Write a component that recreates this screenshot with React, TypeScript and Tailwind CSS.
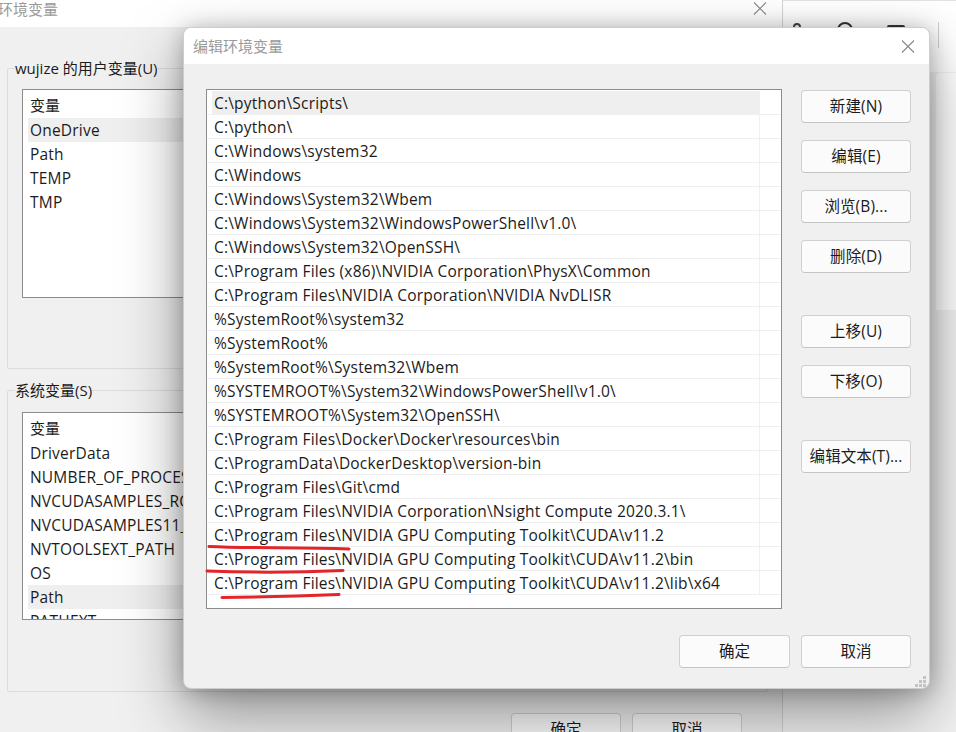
import React from "react";

const FONT = { fontFamily: '"Open Sans", "Noto Sans CJK SC", sans-serif' };

const paths: string[] = [
  "C:\\python\\Scripts\\",
  "C:\\python\\",
  "C:\\Windows\\system32",
  "C:\\Windows",
  "C:\\Windows\\System32\\Wbem",
  "C:\\Windows\\System32\\WindowsPowerShell\\v1.0\\",
  "C:\\Windows\\System32\\OpenSSH\\",
  "C:\\Program Files (x86)\\NVIDIA Corporation\\PhysX\\Common",
  "C:\\Program Files\\NVIDIA Corporation\\NVIDIA NvDLISR",
  "%SystemRoot%\\system32",
  "%SystemRoot%",
  "%SystemRoot%\\System32\\Wbem",
  "%SYSTEMROOT%\\System32\\WindowsPowerShell\\v1.0\\",
  "%SYSTEMROOT%\\System32\\OpenSSH\\",
  "C:\\Program Files\\Docker\\Docker\\resources\\bin",
  "C:\\ProgramData\\DockerDesktop\\version-bin",
  "C:\\Program Files\\Git\\cmd",
  "C:\\Program Files\\NVIDIA Corporation\\Nsight Compute 2020.3.1\\",
  "C:\\Program Files\\NVIDIA GPU Computing Toolkit\\CUDA\\v11.2",
  "C:\\Program Files\\NVIDIA GPU Computing Toolkit\\CUDA\\v11.2\\bin",
  "C:\\Program Files\\NVIDIA GPU Computing Toolkit\\CUDA\\v11.2\\lib\\x64",
];

const userVars = ["OneDrive", "Path", "TEMP", "TMP"];
const sysVars = [
  "DriverData",
  "NUMBER_OF_PROCESSORS",
  "NVCUDASAMPLES_ROOT",
  "NVCUDASAMPLES11_2_ROOT",
  "NVTOOLSEXT_PATH",
  "OS",
  "Path",
  "PATHEXT",
];

function WinButton({ label, className = "" }: { label: string; className?: string }) {
  return (
    <div
      className={
        "h-[33px] flex items-center justify-center rounded-[4px] border border-[#d0d0d0] border-b-[#c4c4c4] bg-[#fbfbfb] text-[15.5px] tracking-[0.1px] text-[#1b1b1b] " +
        className
      }
    >
      {label}
    </div>
  );
}

function CloseX({ color = "#8a8a8a" }: { color?: string }) {
  return (
    <svg width="14" height="13" viewBox="0 0 14 13">
      <path d="M1 0.5 L13 12.5 M13 0.5 L1 12.5" stroke={color} strokeWidth="1.1" fill="none" />
    </svg>
  );
}

function VarList({
  items,
  selected,
  heightClass,
}: {
  items: string[];
  selected: string;
  heightClass: string;
}) {
  return (
    <div className={"ml-[14px] w-[600px] border border-[#8c8c8c] bg-white overflow-hidden " + heightClass}>
      <div className="h-[28px] flex items-center pl-[7px] pt-[2px] text-[15px] text-[#1b1b1b]">变量</div>
      {items.map((v) => (
        <div key={v} className="h-[24px] flex pl-[5px]">
          <div
            className={
              "flex-1 flex items-center pl-[2px] pt-[2px] text-[15.5px] tracking-[0.2px] text-[#1b1b1b] whitespace-nowrap " +
              (v === selected ? "bg-[#efefef]" : "")
            }
          >
            {v}
          </div>
        </div>
      ))}
    </div>
  );
}

export default function App() {
  return (
    <div className="relative w-[956px] h-[732px] overflow-hidden bg-[#f0f0f0]" style={FONT}>
      {/* Right-hand app window */}
      <div className="absolute left-[783px] top-0 w-[173px] h-[732px] flex flex-col">
        <div className="h-[72px] bg-white border-t border-[#e2e2e2] flex items-start">
          <div className="ml-[10px] mt-[22px] w-[8px] h-[10px] rounded-full border-2 border-[#444]" />
          <div className="ml-[36px] mt-[21px] w-[16px] h-[16px] rounded-full border-2 border-[#333]" />
          <div className="ml-[34px] mt-[24px] w-[18px] h-[14px] rounded-[2px] border-2 border-t-[4px] border-[#333]" />
          <div className="ml-[33px] mt-[21px] w-px h-[26px] bg-[#d0d0d0]" />
        </div>
        <div className="flex-1 bg-[#f3f3f3] flex flex-col items-end">
          <div className="w-[20px] h-[237px] mt-px bg-white rounded-tl-[4px]" />
        </div>
      </div>

      {/* Background window: 环境变量 */}
      <div className="absolute left-0 top-0 w-[783px] h-[732px] bg-[#f0f0f0] border-r border-[#d4d4d4] flex flex-col">
        <div className="h-[27px] bg-white flex items-start justify-between shrink-0">
          <span className="-ml-[2px] text-[15px] leading-[19px] text-[#9a9a9a]">环境变量</span>
          <div className="mr-[15px] mt-[2px]">
            <CloseX />
          </div>
        </div>
        <div className="flex flex-col">
          <fieldset className="ml-[7px] mt-[31px] w-[761px] h-[311px] border border-[#dcdcdc] rounded-[2px] p-0 m-0">
            <legend className="ml-[7px] px-0 text-[15px] leading-[20px] text-[#1b1b1b]">wujize 的用户变量(U)</legend>
            <div className="mt-[11px]">
              <VarList items={userVars} selected="OneDrive" heightClass="h-[209px]" />
            </div>
          </fieldset>
          <fieldset className="ml-[7px] mt-[11px] w-[761px] h-[312px] border border-[#dcdcdc] rounded-[2px] p-0 m-0">
            <legend className="ml-[7px] px-0 text-[15px] leading-[20px] text-[#1b1b1b]">系统变量(S)</legend>
            <div className="mt-[12px]">
              <VarList items={sysVars} selected="Path" heightClass="h-[208px]" />
            </div>
          </fieldset>
          <div className="flex justify-end gap-[11px] mt-[21px] pr-[40px]">
            <WinButton label="确定" className="w-[110px]" />
            <WinButton label="取消" className="w-[110px]" />
          </div>
        </div>
      </div>

      {/* Dialog: 编辑环境变量 */}
      <div className="absolute left-[183px] top-[27px] w-[747px] h-[662px] rounded-[8px] border border-[#cdcdcd] bg-[#f0f0f0] overflow-hidden flex flex-col shadow-[0_28px_64px_rgba(0,0,0,0.38),0_2px_22px_rgba(0,0,0,0.26)]">
        <div className="h-[36px] bg-white flex items-center justify-between pl-[9px] pr-[14px] shrink-0">
          <span className="text-[15px] text-[#9a9a9a]">编辑环境变量</span>
          <CloseX />
        </div>
        <div className="flex-1 flex flex-col pl-[22px] pr-[18px] pt-[25px] relative">
          <div className="flex gap-[19px]">
            <div className="w-[576px] h-[520px] border border-[#8c8c8c] bg-white overflow-hidden pt-px">
              {paths.map((p, i) => (
                <div key={i} className="h-[24px] flex border-b border-[#f0f0f0]">
                  <div className="w-[553px] border-r border-[#f0f0f0] flex pl-[5px]">
                    <div
                      className={
                        "flex-1 flex items-center pl-[2px] pt-[2px] text-[15.5px] tracking-[0.2px] text-[#1b1b1b] whitespace-nowrap " +
                        (i === 0 ? "bg-[#efefef]" : "")
                      }
                    >
                      {p}
                    </div>
                  </div>
                </div>
              ))}
            </div>
            <div className="w-[110px] flex flex-col pt-px">
              <WinButton label="新建(N)" />
              <WinButton label="编辑(E)" className="mt-[17px]" />
              <WinButton label="浏览(B)..." className="mt-[17px]" />
              <WinButton label="删除(D)" className="mt-[17px]" />
              <WinButton label="上移(U)" className="mt-[42px]" />
              <WinButton label="下移(O)" className="mt-[17px]" />
              <WinButton label="编辑文本(T)..." className="mt-[42px]" />
            </div>
          </div>
          <div className="flex justify-end gap-[11px] mt-[26px]">
            <WinButton label="确定" className="w-[111px]" />
            <WinButton label="取消" className="w-[110px]" />
          </div>
          <svg className="absolute right-[3px] bottom-[1px]" width="11" height="11" viewBox="0 0 11 11">
            <rect x="8" y="0" width="3" height="3" fill="#c4c4c4" />
            <rect x="4" y="4" width="3" height="3" fill="#c4c4c4" />
            <rect x="8" y="4" width="3" height="3" fill="#c4c4c4" />
            <rect x="0" y="8" width="3" height="3" fill="#c4c4c4" />
            <rect x="4" y="8" width="3" height="3" fill="#c4c4c4" />
            <rect x="8" y="8" width="3" height="3" fill="#c4c4c4" />
          </svg>
        </div>
      </div>

      {/* Red hand-drawn underlines */}
      <svg className="absolute left-0 top-0 pointer-events-none" width="956" height="732" viewBox="0 0 956 732">
        <path d="M209 546.5 C 250 548.5, 300 547, 349 549" stroke="#e3242b" strokeWidth="3" fill="none" strokeLinecap="round" />
        <path d="M207 571 Q 275 573.5 343 570.5" stroke="#e3242b" strokeWidth="3" fill="none" strokeLinecap="round" />
        <path d="M222 597.5 Q 280 597 339 594.5" stroke="#e3242b" strokeWidth="3" fill="none" strokeLinecap="round" />
      </svg>
    </div>
  );
}
